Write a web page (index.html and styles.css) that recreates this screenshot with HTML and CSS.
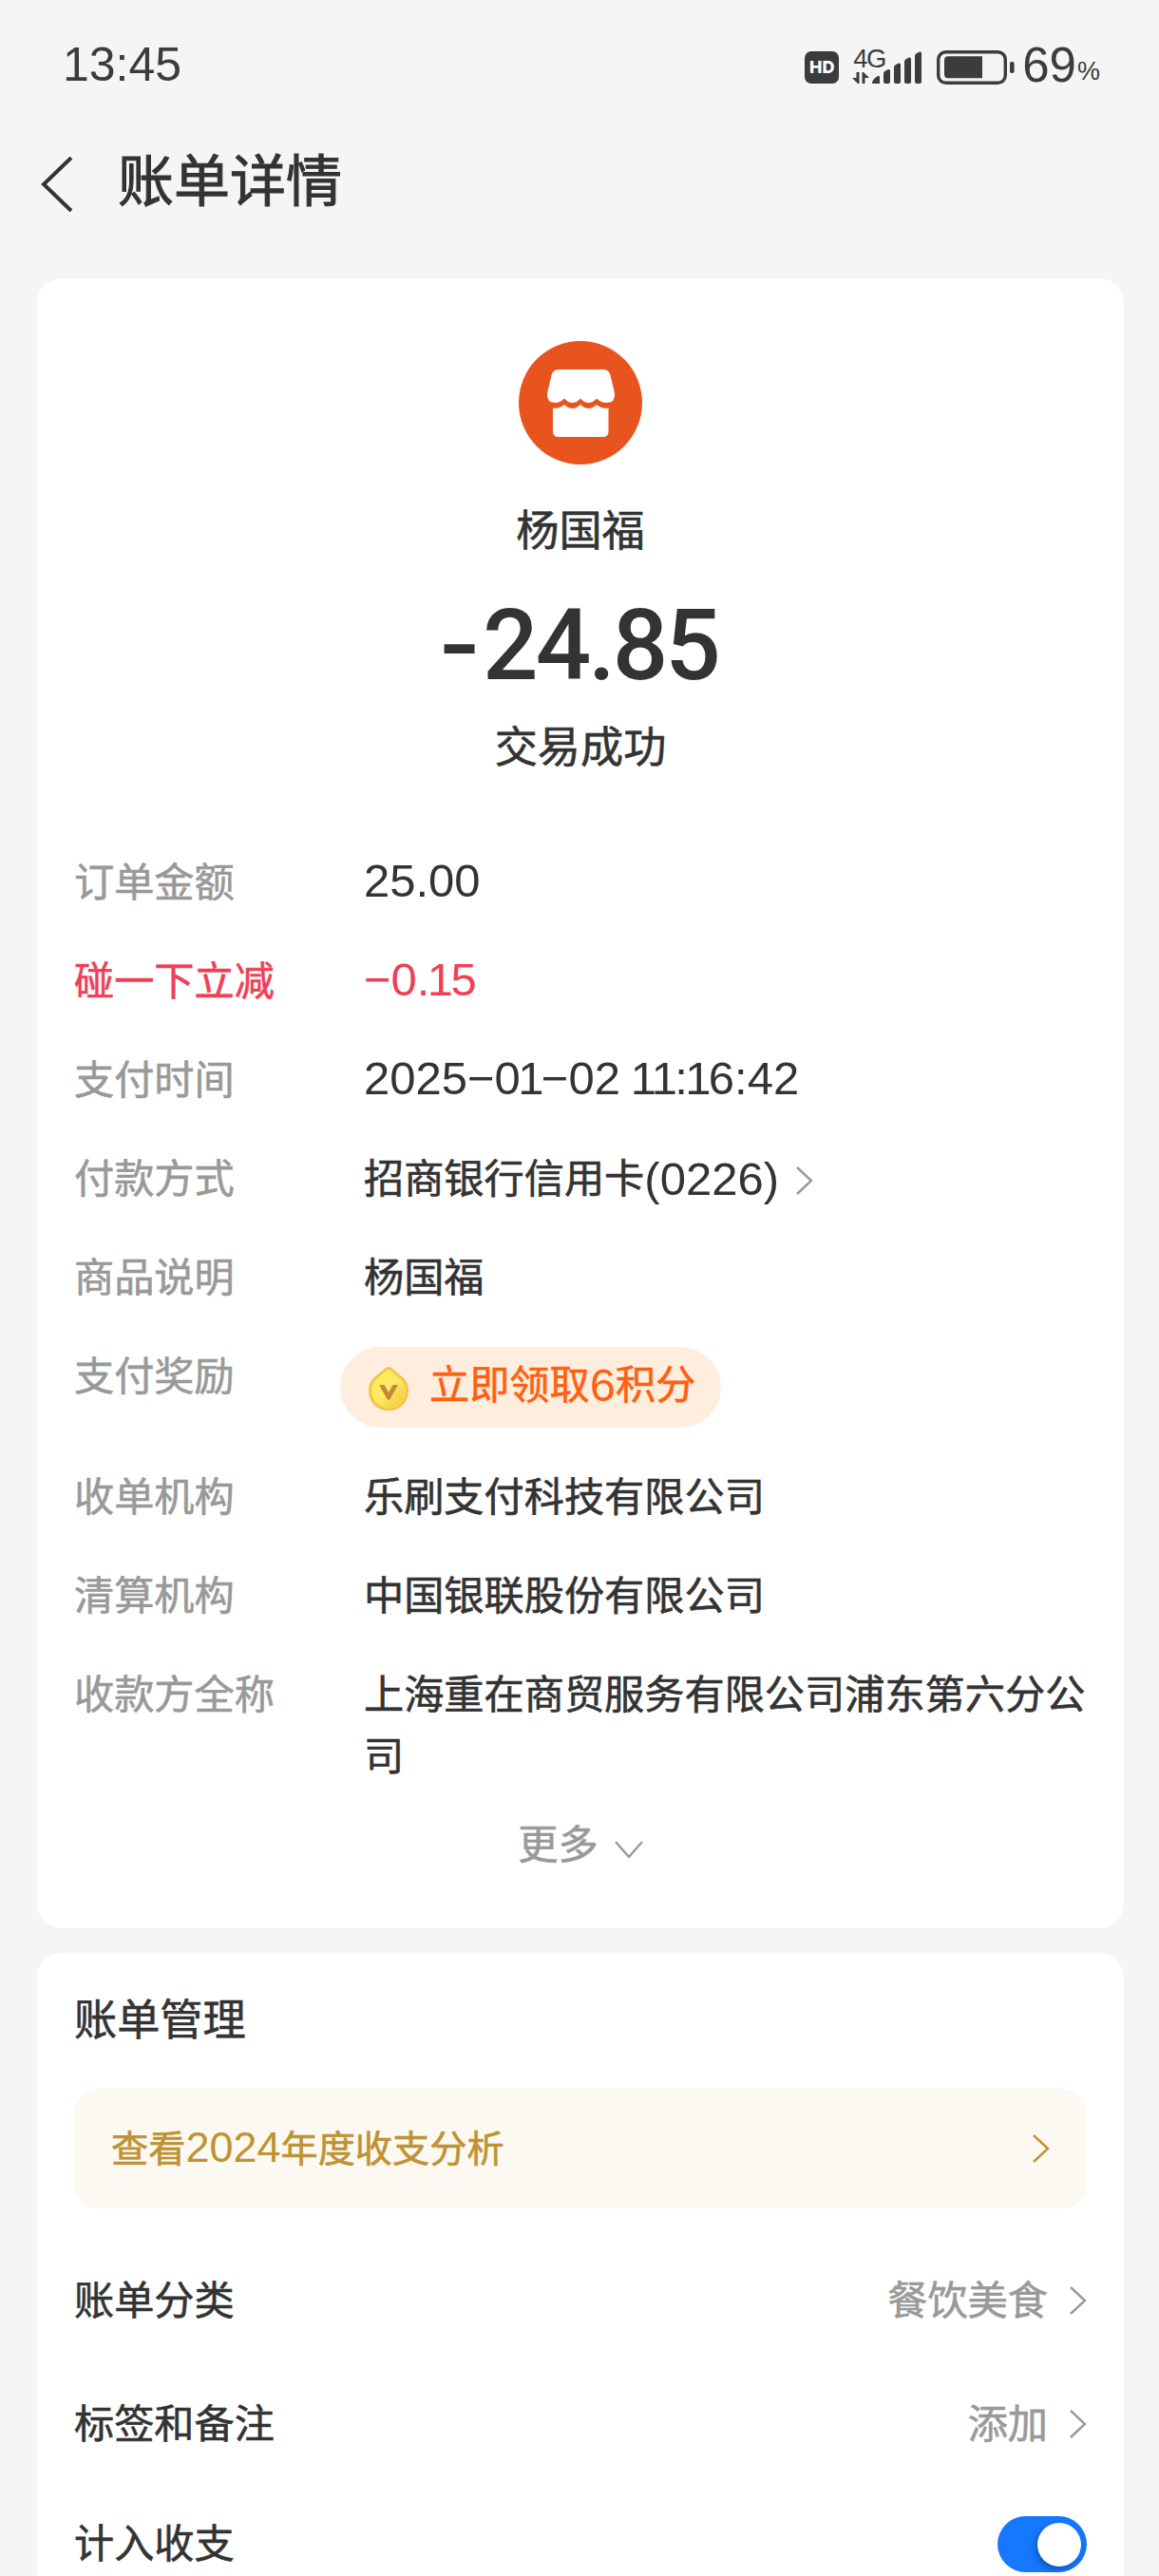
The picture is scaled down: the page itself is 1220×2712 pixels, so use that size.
FILE: index.html
```html
<!DOCTYPE html>
<html lang="zh-CN">
<head>
<meta charset="utf-8">
<title>账单详情</title>
<link rel="stylesheet" href="styles.css">
</head>
<body>
<div class="screen">
  <header class="status">
    <span class="clock">13:45</span>
    <div class="indicators">
      <span class="hd">HD</span>
      <div class="network">
        <span class="net-label">4G</span>
        <svg class="signal" viewBox="0 0 74 36" width="74" height="36" fill="#3c3c3c">
          <path d="M4.500 24h3v12H6L0 30h4.500zM10.500 36V24H12l6 6h-4.500v6z"/>
          <path d="M21 36q-.5-4 6-8q2-.5 2 1v7z"/>
          <path d="M33 24.500q1.500-2.500 5-3.500 2-.3 2 1.500V34q0 2-2 2h-3q-2 0-2-2zM44 18q1.500-2.500 5-3.500 2-.3 2 1.500v18q0 2-2 2h-3q-2 0-2-2zM55 12q1.500-2.500 5-3.500 2-.3 2 1.500v24q0 2-2 2h-3q-2 0-2-2zM66 6q1.500-2.500 5-3.500 2-.3 2 1.500v30q0 2-2 2h-3q-2 0-2-2z"/>
        </svg>
      </div>
      <svg class="battery" viewBox="0 0 82 36" width="82" height="36">
        <rect x="1.700" y="1.700" width="70.600" height="32.600" rx="8" fill="none" stroke="#3c3c3c" stroke-width="3.400"/>
        <path d="M48 6.300v23H12q-4 0-4-4v-15q0-4 4-4z" fill="#3c3c3c"/>
        <rect x="77" y="12" width="4.600" height="12" rx="2" fill="#3c3c3c"/>
      </svg>
      <span class="level">69</span><span class="percent">%</span>
    </div>
  </header>

  <nav class="titlebar">
    <svg class="back" viewBox="0 0 34 58" width="34" height="58"><path d="M32 1 L3 29 L32 57" fill="none" stroke="#333" stroke-width="4"/></svg>
    <h1>账单详情</h1>
  </nav>

  <section class="card bill">
    <div class="summary">
      <svg class="shop" viewBox="0 0 130 130" width="130" height="130">
        <circle cx="65" cy="65" r="65" fill="#e8541e"/>
        <path fill="#fff" d="M42 30H89q6 0 7.500 6l4.500 19q1 10-8.500 10-6 0-10.500-4.500Q78 65 73.500 65T65 60.500Q61 65 56.500 65T48 60.500Q43.500 65 38.500 65 29 65 30 55l4.500-19Q36 30 42 30z"/>
        <path fill="#fff" d="M36 70.500q7.500 1 12-3.500 4 4 8.500 4t8.500-4q4 4 8.500 4t8.500-4q4.500 4.500 12.500 3.500V95q0 6-6 6H42q-6 0-6-6z"/>
      </svg>
      <p class="payee">杨国福</p>
      <p class="amount"><span class="sign">-</span>24.85</p>
      <p class="state">交易成功</p>
    </div>

    <dl class="details">
      <div class="row"><dt>订单金额</dt><dd><span class="num">25.00</span></dd></div>
      <div class="row discount"><dt>碰一下立减</dt><dd><span class="num">−0.<i>1</i>5</span></dd></div>
      <div class="row"><dt>支付时间</dt><dd><span class="num">2025−0<i>1</i>−02 <i>1</i><i>1</i>:<i>1</i>6:42</span></dd></div>
      <div class="row"><dt>付款方式</dt><dd class="link">招商银行信用卡<span class="num">(0226)</span><svg class="chevron" viewBox="0 0 18 30" width="18" height="30"><path d="M1 1 L16 15 L1 29"/></svg></dd></div>
      <div class="row"><dt>商品说明</dt><dd>杨国福</dd></div>
      <div class="row reward"><dt>支付奖励</dt><dd>
        <span class="pill">
          <svg class="coin" viewBox="0 0 42 46" width="42" height="46">
            <defs><linearGradient id="gold" x1="0" y1="0" x2="1" y2="1"><stop offset="0" stop-color="#fff04f"/><stop offset=".5" stop-color="#ffe869"/><stop offset="1" stop-color="#f2c32f"/></linearGradient></defs>
            <path fill="#efc14c" d="M21 0q2 0 4 2l11 9q6 6 6 14 0 9-6 15t-15 6-15-6-6-15q0-8 6-14l11-9q2-2 4-2z"/>
            <path fill="url(#gold)" stroke="#f7d94d" stroke-width="1.500" d="M21 3q1.500 0 3 1.500l10 8.500q5 5 5 12 0 7-5 12.500T21 43 8 37.500 3 25q0-7 5-12l10-8.500Q19.500 3 21 3z"/>
            <path fill="#c48a3a" d="M11 19h5.500L21 27l4.500-8H31L22.500 34q-1.500 2-3 0z"/>
          </svg>立即领取<span class="num">6</span>积分
        </span></dd></div>
      <div class="row"><dt>收单机构</dt><dd>乐刷支付科技有限公司</dd></div>
      <div class="row"><dt>清算机构</dt><dd>中国银联股份有限公司</dd></div>
      <div class="row"><dt>收款方全称</dt><dd>上海重在商贸服务有限公司浦东第六分公司</dd></div>
    </dl>

    <div class="more">更多<svg class="chevron" viewBox="0 0 30 20" width="30" height="20"><path d="M1 1 L15 17 L29 1"/></svg></div>
  </section>

  <section class="card manage">
    <h2>账单管理</h2>
    <div class="banner"><span>查看<span class="num">2024</span>年度收支分析</span><svg class="chevron" viewBox="0 0 18 30" width="18" height="30"><path d="M1 1 L16 15 L1 29"/></svg></div>
    <div class="option"><span>账单分类</span><span class="hint">餐饮美食<svg class="chevron" viewBox="0 0 18 30" width="18" height="30"><path d="M1 1 L16 15 L1 29"/></svg></span></div>
    <div class="option"><span>标签和备注</span><span class="hint">添加<svg class="chevron" viewBox="0 0 18 30" width="18" height="30"><path d="M1 1 L16 15 L1 29"/></svg></span></div>
    <div class="option last"><span>计入收支</span><span class="switch"><span class="knob"></span></span></div>
  </section>
</div>
</body>
</html>
```
FILE: styles.css
```css
* { box-sizing: border-box; margin: 0; padding: 0; }

body {
  background: #f5f5f5;
  color: #333;
  font-family: "Liberation Sans", "Noto Sans CJK SC", sans-serif;
  font-size: 42.2px;
  line-height: 65px;
  -webkit-text-stroke: 0.6px currentColor;
}

.screen {
  width: 1220px;
  height: 2712px;
  overflow: hidden;
}

h1, h2 { font-weight: 400; }
i { font-style: normal; margin: 0 -2.7px; }

/* status bar */
.status {
  display: flex;
  justify-content: space-between;
  height: 140px;
  padding: 36px 62px 0 66px;
  color: #3c3c3c;
  -webkit-text-stroke: 0;
}
.clock { font-size: 50px; }
.indicators { display: flex; align-items: flex-start; }
.hd {
  width: 36px;
  height: 34px;
  margin: 18px 14px 0 0;
  border-radius: 7px;
  background: #3c3c3c;
  color: #fff;
  font: 800 18px/34px Inter, sans-serif;
  text-align: center;
}
.network {
  display: grid;
  margin: 16px 15px 0 0;
  width: 74px;
}
.net-label {
  grid-area: 1 / 1;
  font-size: 27.5px;
  line-height: 27px;
  letter-spacing: -1.5px;
  margin: -4px 0 0 1px;
}
.signal { grid-area: 1 / 1; }
.battery { margin-top: 17px; }
.level { margin-left: 8px; font-size: 51px; }
.percent { font-size: 27px; line-height: 27px; margin: 26px 0 0 1px; }

/* title */
.titlebar {
  display: flex;
  align-items: center;
  height: 104px;
  padding-left: 43px;
}
.back { margin-right: 47px; margin-top: 4px; }
h1 { font-size: 59px; line-height: 104px; -webkit-text-stroke-width: 1px; }

.card {
  width: 1144px;
  margin-left: 39px;
  padding: 0 39px;
  border-radius: 26px;
  background: #fff;
}
.bill { height: 1737px; margin-top: 49px; margin-bottom: 26px; padding-top: 66px; }

.summary {
  display: flex;
  flex-direction: column;
  align-items: center;
  height: 538px;
}
.payee { margin-top: 38px; font-size: 45.2px; }
.amount {
  margin-top: 36px;
  font: 500 103px/104px Roboto, sans-serif;
  letter-spacing: -3px;
  -webkit-text-stroke: 0;
}
.sign {
  display: inline-block;
  margin-right: 10px;
  transform: scaleX(1.2);
}
.state { margin-top: 23px; font-size: 45.2px; }

.details { display: flex; flex-direction: column; gap: 39px; }
.row { display: flex; }
dt { width: 305px; flex: none; color: #999; }
dd { flex: 1; white-space: normal; margin-right: -4px; }
.num { font-size: 49px; line-height: 1; -webkit-text-stroke: 0; }
.discount, .discount dt { color: #ef4057; }
.link { display: flex; align-items: center; }
.link .chevron { margin-left: 18px; margin-top: 3px; }
.reward { height: 88px; }
.pill {
  display: inline-flex;
  align-items: center;
  height: 85px;
  margin: 1px 0 0 -25px;
  padding: 0 27px 4px 30px;
  border-radius: 43px;
  background: #ffeede;
  color: #ff6010;
}
.coin { margin-right: 22px; margin-top: 6px; }

.chevron { fill: none; stroke: #999; stroke-width: 2.4; }

.more {
  display: flex;
  justify-content: center;
  align-items: center;
  margin-top: 28px;
  color: #999;
}
.more .chevron { margin-left: 17px; margin-top: 11px; }

/* bill management */
.manage { height: 700px; padding-top: 39px; }
h2 { font-size: 45.2px; line-height: 65px; }
.banner {
  display: flex;
  align-items: center;
  justify-content: space-between;
  height: 126px;
  margin-top: 39px;
  padding: 0 39px;
  border-radius: 26px;
  background: #fcf8f2;
  color: #bf9332;
  font-size: 39.2px;
}
.banner .num { font-size: 45px; }
.banner .chevron { stroke: #bf9332; }
.option {
  display: flex;
  align-items: center;
  justify-content: space-between;
  height: 130px;
}
.banner + .option { margin-top: 32px; }
.option.last { height: 123px; }
.hint { display: flex; align-items: center; color: #999; }
.hint .chevron { margin-left: 23px; }
.switch {
  display: flex;
  justify-content: flex-end;
  align-items: center;
  width: 94px;
  height: 59px;
  padding: 6px;
  border-radius: 30px;
  background: #1677ff;
}
.knob {
  width: 46px;
  height: 46px;
  border-radius: 50%;
  background: #fff;
  box-shadow: -2px 3px 6px rgba(0, 0, 0, .3);
}
```
